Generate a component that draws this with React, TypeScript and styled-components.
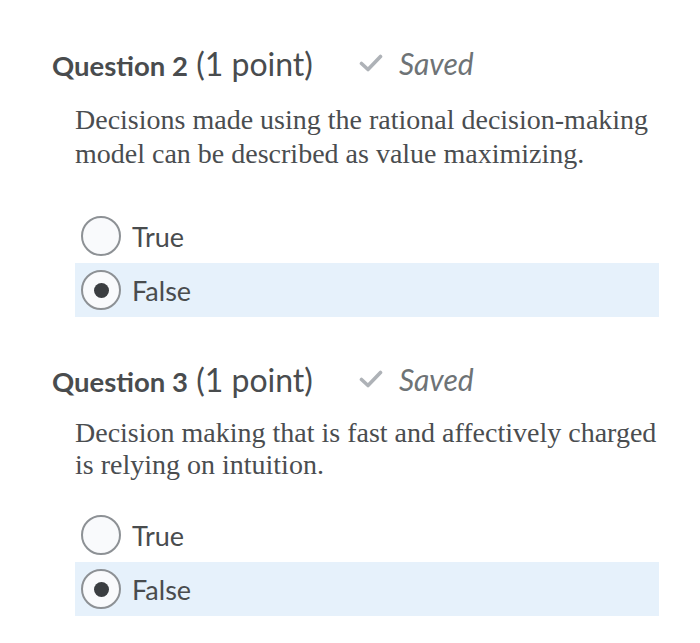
import React from 'react'
import styled, { createGlobalStyle } from 'styled-components'

const GlobalStyle = createGlobalStyle`
  body {
    margin: 0;
    background: #ffffff;
  }
`

type Question = {
  number: number
  text: string
  selected: string
  lineHeight: number
  promptGap: number
  optionsGap: number
}

const questions: Question[] = [
  {
    number: 2,
    text: 'Decisions made using the rational decision-making model can be described as value maximizing.',
    selected: 'False',
    lineHeight: 34,
    promptGap: 19,
    optionsGap: 38,
  },
  {
    number: 3,
    text: 'Decision making that is fast and affectively charged is relying on intuition.',
    selected: 'False',
    lineHeight: 32,
    promptGap: 17,
    optionsGap: 27,
  },
]

const CheckIcon = () => (
  <svg width="24" height="18" viewBox="0 0 24 18">
    <path
      d="M2.5 9.5 L9 15.5 L21.5 2.5"
      fill="none"
      stroke="#aeb2b7"
      strokeWidth="3.6"
      strokeLinecap="round"
      strokeLinejoin="round"
    />
  </svg>
)

const App: React.FC = () => {
  return (
    <>
      <GlobalStyle />
      <Page>
        {questions.map((q) => (
          <Block key={q.number}>
            <Header>
              <Title>
                <b>Question {q.number}</b> (1 point)
              </Title>
              <Status>
                <CheckIcon />
                <span>Saved</span>
              </Status>
            </Header>
            <Prompt lh={q.lineHeight} gap={q.promptGap}>
              {q.text}
            </Prompt>
            <Options gap={q.optionsGap}>
              {['True', 'False'].map((opt) => (
                <Option key={opt} selected={q.selected === opt}>
                  <Radio selected={q.selected === opt} />
                  <Label>{opt}</Label>
                </Option>
              ))}
            </Options>
          </Block>
        ))}
      </Page>
    </>
  )
}

export default App

const Page = styled.div`
  padding: 42px 41px 0 52px;
  display: flex;
  flex-direction: column;
  gap: 41px;
`

const Block = styled.div`
  display: flex;
  flex-direction: column;
`

const Header = styled.div`
  display: flex;
  align-items: center;
  gap: 46px;
  height: 42px;
`

const Title = styled.h2`
  margin: 0;
  font-family: Lato, 'Liberation Sans', sans-serif;
  font-weight: 400;
  font-size: 32px;
  color: #494c4e;
  white-space: nowrap;

  b {
    font-weight: 700;
    font-size: 27.5px;
  }
`

const Status = styled.div`
  display: flex;
  align-items: center;
  gap: 16px;
  font-family: Lato, 'Liberation Sans', sans-serif;
  font-style: italic;
  font-size: 30px;
  color: #6e7376;
`

const Prompt = styled.p<{ lh: number; gap: number }>`
  margin: ${(p) => p.gap}px 0 0 23px;
  font-family: 'Liberation Serif', 'Times New Roman', serif;
  font-size: 28px;
  line-height: ${(p) => p.lh}px;
  color: #4a4d50;
  max-width: 590px;
`

const Options = styled.div<{ gap: number }>`
  display: flex;
  flex-direction: column;
  margin: ${(p) => p.gap}px 0 0 23px;
`

const Option = styled.div<{ selected: boolean }>`
  display: flex;
  align-items: center;
  gap: 11px;
  height: 54px;
  padding-left: 6px;
  background: ${(p) => (p.selected ? '#e6f1fb' : 'transparent')};
`

const Radio = styled.span<{ selected: boolean }>`
  width: 40px;
  height: 40px;
  box-sizing: border-box;
  border-radius: 50%;
  border: 2px solid #8d9195;
  background: #f9fafc;
  display: flex;
  align-items: center;
  justify-content: center;

  &::after {
    content: '';
    display: ${(p) => (p.selected ? 'block' : 'none')};
    width: 15px;
    height: 15px;
    border-radius: 50%;
    background: #3b3e41;
  }
`

const Label = styled.span`
  font-family: Lato, 'Liberation Sans', sans-serif;
  font-size: 27px;
  color: #494c4e;
`
